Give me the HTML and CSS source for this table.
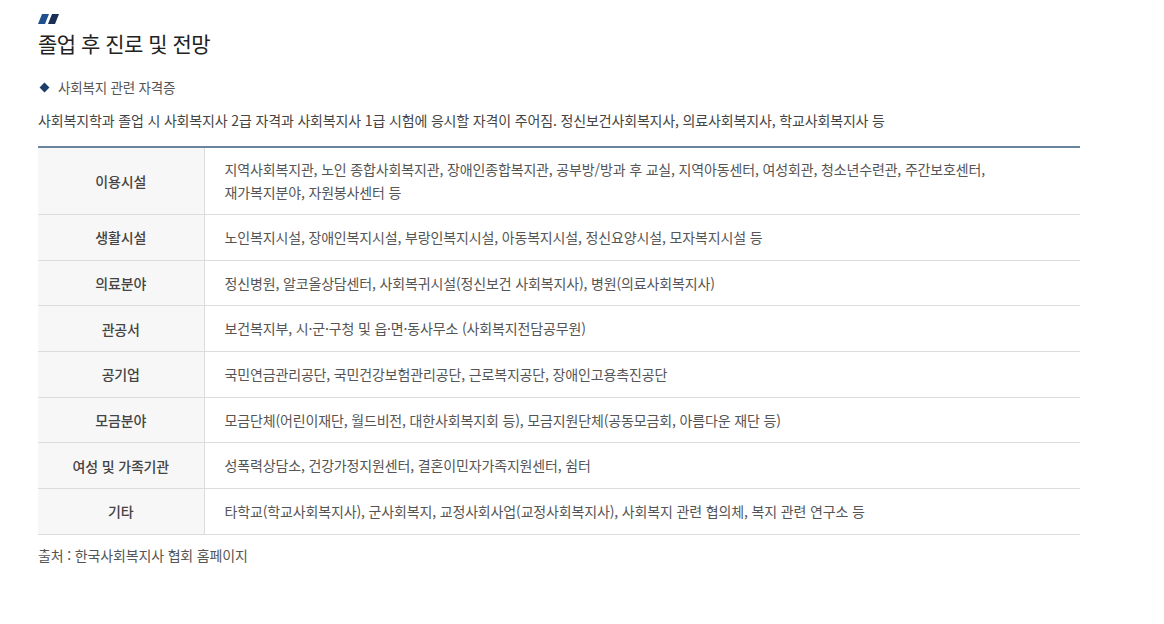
FILE: index.html
```html
<!DOCTYPE html>
<html lang="ko">
  <head>
    <meta charset="UTF-8" />
    <meta name="viewport" content="width=device-width, initial-scale=1.0" />
    <title>졸업 후 진로 및 전망</title>
    <link rel="stylesheet" href="styles.css">
  </head>
  <body>
    <div class="content">
      <div class="title-mark">
        <svg width="22" height="10" viewBox="0 0 22 10">
          <polygon points="4,0 11,0 7,10 0,10" fill="#1f4f8f" />
          <polygon points="14,0 21,0 17,10 10,10" fill="#1c2f55" />
        </svg>
      </div>
      <h2 class="title">졸업 후 진로 및 전망</h2>
      <h3 class="sub-title"><span class="dia"></span>사회복지 관련 자격증</h3>
      <p class="desc">사회복지학과 졸업 시 사회복지사 2급 자격과 사회복지사 1급 시험에 응시할 자격이 주어짐. 정신보건사회복지사, 의료사회복지사, 학교사회복지사 등</p>
      <table class="career">
        <tr>
          <th>이용시설</th>
          <td>지역사회복지관, 노인 종합사회복지관, 장애인종합복지관, 공부방/방과 후 교실, 지역아동센터, 여성회관, 청소년수련관, 주간보호센터,<br />재가복지분야, 자원봉사센터 등</td>
        </tr>
        <tr>
          <th>생활시설</th>
          <td>노인복지시설, 장애인복지시설, 부랑인복지시설, 아동복지시설, 정신요양시설, 모자복지시설 등</td>
        </tr>
        <tr>
          <th>의료분야</th>
          <td>정신병원, 알코올상담센터, 사회복귀시설(정신보건 사회복지사), 병원(의료사회복지사)</td>
        </tr>
        <tr>
          <th>관공서</th>
          <td>보건복지부, 시·군·구청 및 읍·면·동사무소 (사회복지전담공무원)</td>
        </tr>
        <tr>
          <th>공기업</th>
          <td>국민연금관리공단, 국민건강보험관리공단, 근로복지공단, 장애인고용촉진공단</td>
        </tr>
        <tr>
          <th>모금분야</th>
          <td>모금단체(어린이재단, 월드비전, 대한사회복지회 등), 모금지원단체(공동모금회, 아름다운 재단 등)</td>
        </tr>
        <tr>
          <th>여성 및 가족기관</th>
          <td>성폭력상담소, 건강가정지원센터, 결혼이민자가족지원센터, 쉼터</td>
        </tr>
        <tr>
          <th>기타</th>
          <td>타학교(학교사회복지사), 군사회복지, 교정사회사업(교정사회복지사), 사회복지 관련 협의체, 복지 관련 연구소 등</td>
        </tr>
      </table>
      <p class="source">출처 : 한국사회복지사 협회 홈페이지</p>
    </div>
  </body>
</html>
```

FILE: styles.css
```css
* {
  margin: 0;
  padding: 0;
  box-sizing: border-box;
}
body {
  font-family: "Noto Sans CJK KR", "Noto Sans", sans-serif;
  color: #555;
  background: #fff;
}
.content {
  width: 1042px;
  margin-left: 38px;
  padding-top: 14px;
}
.title-mark {
  height: 10px;
  line-height: 0;
}
.title {
  margin-top: 6px;
  font-size: 21px;
  font-weight: 400;
  color: #222;
  line-height: 26px;
  letter-spacing: -0.5px;
}
.sub-title {
  margin-top: 22px;
  display: flex;
  align-items: center;
  font-size: 13.5px;
  font-weight: 400;
  color: #555;
  line-height: 18px;
  letter-spacing: -0.2px;
}
.sub-title .dia {
  width: 7px;
  height: 7px;
  background: #1c3c6b;
  transform: rotate(45deg);
  margin: 0 10px 0 3px;
}
.desc {
  margin-top: 14px;
  font-size: 14px;
  line-height: 20px;
  color: #444;
  letter-spacing: -0.15px;
}
.career {
  width: 100%;
  margin-top: 16px;
  border-collapse: collapse;
  border-top: 2px solid #6a849e;
  font-size: 14px;
  letter-spacing: -0.15px;
}
.career th {
  width: 166px;
  background: #f7f7f7;
  font-weight: 500;
  color: #444;
  border-bottom: 1px solid #dcdcdc;
  border-right: 1px solid #dcdcdc;
  text-align: center;
  height: 45.7px;
}
.career td {
  padding: 10px 20px;
  line-height: 23px;
  color: #555;
  border-bottom: 1px solid #dcdcdc;
  height: 45.7px;
}
.source {
  margin-top: 10px;
  font-size: 14px;
  color: #555;
  line-height: 20px;
  letter-spacing: -0.15px;
}
```
